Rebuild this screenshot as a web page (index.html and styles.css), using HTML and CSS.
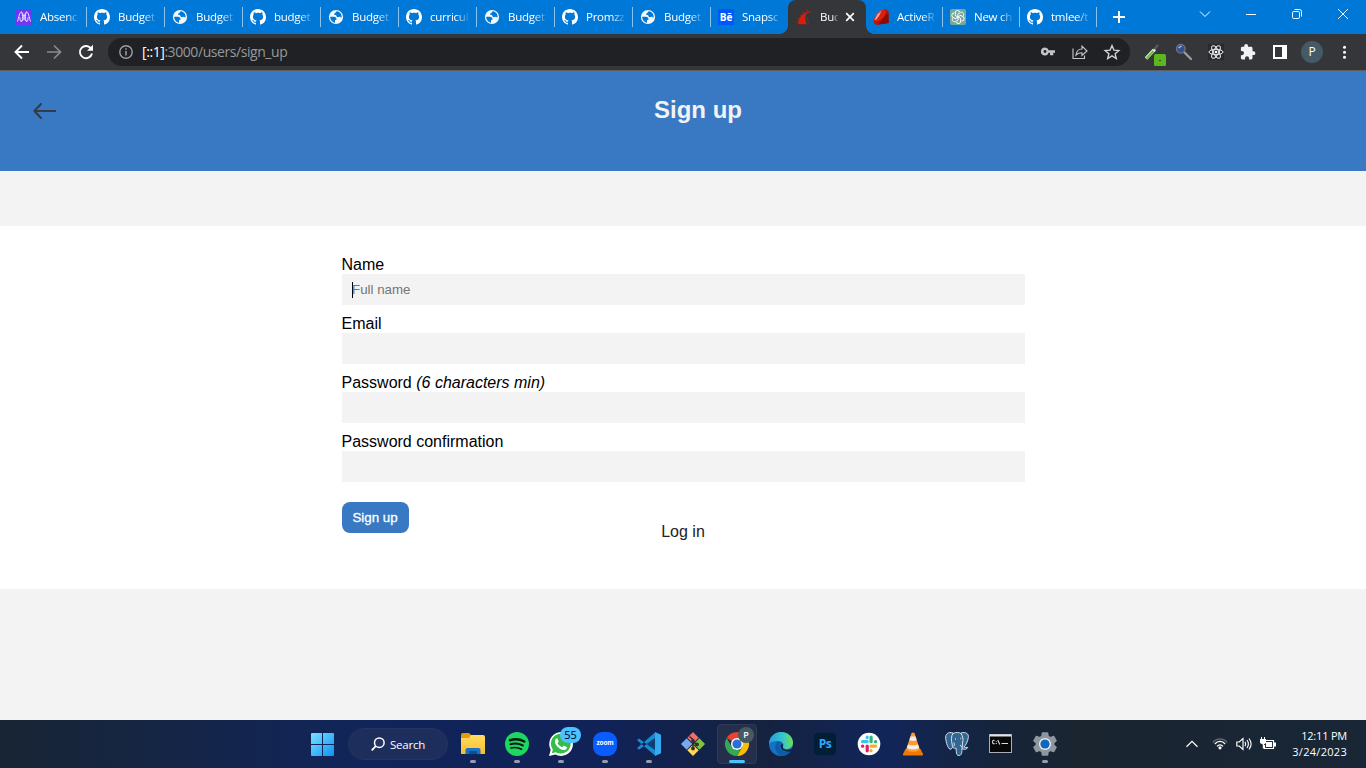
FILE: index.html
```html
<!DOCTYPE html>
<html lang="en">
<head>
<meta charset="utf-8">
<title>Budget App</title>
<link rel="stylesheet" href="styles.css">
</head>
<body>
<svg class="defs" width="0" height="0">
  <defs>
    <symbol id="github" viewBox="0 0 16 16"><path fill="#fff" d="M8 0C3.58 0 0 3.58 0 8c0 3.54 2.29 6.53 5.47 7.59.4.07.55-.17.55-.38 0-.19-.01-.82-.01-1.49-2.01.37-2.53-.49-2.69-.94-.09-.23-.48-.94-.82-1.13-.28-.15-.68-.52-.01-.53.63-.01 1.08.58 1.23.82.72 1.21 1.87.87 2.33.66.07-.52.28-.87.51-1.07-1.78-.2-3.64-.89-3.64-3.95 0-.87.31-1.59.82-2.15-.08-.2-.36-1.02.08-2.12 0 0 .67-.21 2.2.82.64-.18 1.32-.27 2-.27s1.36.09 2 .27c1.53-1.04 2.2-.82 2.2-.82.44 1.1.16 1.92.08 2.12.51.56.82 1.27.82 2.15 0 3.07-1.87 3.75-3.65 3.95.29.25.54.73.54 1.48 0 1.07-.01 1.93-.01 2.2 0 .21.15.46.55.38A8.01 8.01 0 0 0 16 8c0-4.42-3.58-8-8-8z"/></symbol>
    <symbol id="globe" viewBox="0 0 16 16"><circle cx="8" cy="8" r="7.100" fill="#f4f6f8"/><path fill="#0078d7" d="M2.200 7.800h3.600c1.600 0 2.800 1.100 2.800 2.300 0 .8-.9 1-1.600 1v2.600C4.500 13.300 2.200 11 2.200 7.800zM9 2.300c-1.200.2-.8 1.300-1.700 1.700-.9.400-1.500.8-1.200 1.500.3.700 1.500.2 2 .8.600.800.200 1.500 1.200 1.800 1 .2 1.300-.3 2.200-.3s1 .7 2.200.6C13.800 5.200 11.800 2.700 9 2.300z"/></symbol>
    <linearGradient id="gWin" x2="1" y2="1"><stop stop-color="#7be2ff"/><stop offset="1" stop-color="#0c92f4"/></linearGradient>
    <linearGradient id="gFolder" x2="0" y2="1"><stop stop-color="#ffdc63"/><stop offset="1" stop-color="#fbbd2a"/></linearGradient>
    <linearGradient id="gEdge" y1="0" y2="0" x2="1"><stop stop-color="#249de0"/><stop offset=".6" stop-color="#38c7c8"/><stop offset="1" stop-color="#6fe04c"/></linearGradient>
    <linearGradient id="gRuby" x2="1" y2="1"><stop stop-color="#f7b5a5"/><stop offset=".4" stop-color="#cf1507"/><stop offset="1" stop-color="#7d0800"/></linearGradient>
  </defs>
</svg>

<header class="tabstrip">
  <nav class="tabs">
    <div class="tab"><svg class="fav" viewBox="0 0 16 16"><path fill="#6f36f5" d="M0 0h16v16H0z"/><g fill="none" stroke="#e6dcff" stroke-width="1"><path d="M1.500 12.500C3 8 3.500 3 5.200 3S7 12.500 5.200 12.500 4.500 8 3.500 8M14.500 12.500C13 8 12.500 3 10.800 3S9 12.500 10.800 12.500 11.500 8 12.500 8M5.200 3C7.500 3 8 12.500 10.800 12.500M10.800 3C8.500 3 8 12.500 5.200 12.500"/></g></svg><span class="label">Absenc</span></div>
    <div class="tab"><svg class="fav"><use href="#github"/></svg><span class="label">Budget</span></div>
    <div class="tab"><svg class="fav"><use href="#globe"/></svg><span class="label">Budget</span></div>
    <div class="tab"><svg class="fav"><use href="#github"/></svg><span class="label">budget</span></div>
    <div class="tab"><svg class="fav"><use href="#globe"/></svg><span class="label">Budget</span></div>
    <div class="tab"><svg class="fav"><use href="#github"/></svg><span class="label">curricul</span></div>
    <div class="tab"><svg class="fav"><use href="#globe"/></svg><span class="label">Budget</span></div>
    <div class="tab"><svg class="fav"><use href="#github"/></svg><span class="label">Promzz</span></div>
    <div class="tab"><svg class="fav"><use href="#globe"/></svg><span class="label">Budget</span></div>
    <div class="tab last"><span class="fav behance">Bē</span><span class="label">Snapsc</span></div>
    <div class="tab active"><svg class="fav" viewBox="0 0 16 16"><path fill="#d91c0c" d="M2 15.200C2.500 9 6 3.500 12.500 3c1 0 1.800.3 2.200.8-3-.2-4.700.9-5.200 3.200-.5 3 .2 6 1 8.200z"/><path stroke="#d91c0c" stroke-width="1.200" d="M.5 13l1 .3M1.600 9.500l1 .5M3.800 5.800l.8.800M7 3l.5 1M11 1l.2 1.200M14.500 1.800l-.5.800M11 10h1.200M11.500 13h1.400"/></svg><span class="label">Buc</span><svg class="close" viewBox="0 0 10 10"><path d="M1.200 1.200l7.600 7.600M8.800 1.200L1.200 8.800" stroke="#fff" stroke-width="1.700"/></svg></div>
    <div class="tab narrow"><svg class="fav" viewBox="0 0 16 16"><path fill="url(#gRuby)" d="M.5 10.500L3.500 5 8 1l4.500-.9L15.500 2l.2 12L4 16 .8 14.500z"/><path fill="#d9200f" d="M5 6l5-4.500 3.500 1L11 8 6 12 3 12z"/><path fill="#fff" opacity=".6" d="M1.500 11l3-5.500 4-3.500-2.500 5-3 4z"/><path fill="#8d0a02" d="M11 8l4.500-4.500-.2 10.500-9.300 1.300z"/></svg><span class="label">ActiveR</span></div>
    <div class="tab narrow"><svg class="fav" viewBox="0 0 16 16"><rect width="16" height="16" rx="2" fill="#74a99b"/><g fill="none" stroke="#fff" stroke-width=".95"><path id="petal" d="M7.900 8.100V5l2.700-1.600c2.200-.8 4 1.600 2.600 3.500"/><use href="#petal" transform="rotate(60 8 8)"/><use href="#petal" transform="rotate(120 8 8)"/><use href="#petal" transform="rotate(180 8 8)"/><use href="#petal" transform="rotate(240 8 8)"/><use href="#petal" transform="rotate(300 8 8)"/></g></svg><span class="label">New ch</span></div>
    <div class="tab narrow"><svg class="fav"><use href="#github"/></svg><span class="label">tmlee/t</span></div>
  </nav>
  <svg class="newtab" viewBox="0 0 12 12"><path d="M6 0v12M0 6h12" stroke="#fff" stroke-width="2"/></svg>
  <div class="winctl">
    <svg viewBox="0 0 46 28"><path d="M18 11.500l5 5 5-5"/></svg>
    <svg viewBox="0 0 46 28"><path d="M18 14.500h10"/></svg>
    <svg viewBox="0 0 46 28"><rect x="18.500" y="11.500" width="7" height="7" rx="1.300"/><path d="M20.500 9.500h5q2 0 2 2v5"/></svg>
    <svg viewBox="0 0 46 28"><path d="M18 9l10 10M28 9L18 19"/></svg>
  </div>
</header>

<div class="toolbar">
  <div class="nav">
    <svg viewBox="0 0 16 16"><path d="M15 8H2M8 1.500L1.500 8 8 14.500" stroke="#fff" stroke-width="1.900" fill="none"/></svg>
    <svg viewBox="0 0 16 16"><path d="M1 8h13M8 1.500L14.500 8 8 14.500" stroke="#8b8c8e" stroke-width="1.700" fill="none"/></svg>
    <svg viewBox="0 0 16 16"><path d="M13.200 4.800A6.100 6.100 0 1 0 14 9.500" stroke="#fff" stroke-width="1.900" fill="none"/><path d="M15 .8v6H9z" fill="#fff"/></svg>
  </div>
  <div class="address">
    <svg class="info" viewBox="0 0 14 14"><circle cx="7" cy="7" r="6.200" fill="none" stroke="#9aa0a6" stroke-width="1.400"/><path d="M7 6v4.500M7 3.300v1.500" stroke="#9aa0a6" stroke-width="1.500"/></svg>
    <span class="url"><b>[::1]</b>:3000/users/sign_up</span>
    <svg class="act" viewBox="0 0 16 16"><path fill="#c3c4c6" fill-rule="evenodd" d="M5 3.500a4 4 0 1 0 3.700 5.300H10v2.400h3.300V8.800H15V6.200H8.700A4 4 0 0 0 5 3.500zm0 2.600a1.450 1.450 0 1 1 0 2.900 1.450 1.450 0 0 1 0-2.900z"/></svg>
    <svg class="act" viewBox="0 0 16 16"><path d="M1 4.500v10h11.500v-3M4 11c.5-4 2.500-6 6-6V2.200L15 7l-5 4.400V8.700C7.500 8.700 5.500 9.300 4 11z" fill="none" stroke="#c3c4c6" stroke-width="1.150"/></svg>
    <svg class="act" viewBox="0 0 16 16"><path d="M8 1.500l1.900 4.600 5 .4-3.800 3.200 1.200 4.800L8 11.900l-4.300 2.600 1.200-4.800L1.100 6.500l5-.4z" fill="none" stroke="#d0d1d3" stroke-width="1.350"/></svg>
  </div>
  <div class="exts">
    <svg viewBox="0 0 24 24"><path d="M13 11l5-6" stroke="#565b5c" stroke-width="2.400"/><path d="M13.500 9.500l2 1.500" stroke="#ddd" stroke-width="2"/><path d="M6 18.500l8-8.500" stroke="#dff3d0" stroke-width="3.300"/><path d="M6.500 18.500l7-7.500" stroke="#5ec52f" stroke-width="2"/><rect x="14" y="14" width="12" height="12" rx="1.500" fill="#5cb61e"/><path d="M19 20.500h2" stroke="#234d0b"/></svg>
    <svg viewBox="0 0 24 24"><path d="M12 12l7 7" stroke="#9a9b9f" stroke-width="2.400" stroke-linecap="round"/><circle cx="8.800" cy="8.800" r="4.300" fill="#324f91" stroke="#6d7380" stroke-width="1.400"/><path d="M6.500 8l3-2" stroke="#a7bce4" stroke-width="1.500"/></svg>
    <svg viewBox="0 0 24 24"><path fill="#292a2d" d="M4 4h16v16H4z"/><g fill="none" stroke="#eee" stroke-width="1"><ellipse cx="12" cy="12" rx="7" ry="2.700"/><ellipse cx="12" cy="12" rx="7" ry="2.700" transform="rotate(60 12 12)"/><ellipse cx="12" cy="12" rx="7" ry="2.700" transform="rotate(120 12 12)"/></g><circle cx="12" cy="12" r="1.300" fill="#fff"/></svg>
    <svg viewBox="0 0 24 24"><path fill="#f1f3f4" d="M17.500 11.300h-1V8.200c0-.8-.6-1.400-1.400-1.400H12v-.9a1.900 1.900 0 0 0-3.800 0v.9H6.300c-.8 0-1.400.6-1.400 1.400V11h1a2 2 0 0 1 0 4.200h-1V18c0 .8.600 1.400 1.400 1.400H9v-1a2 2 0 0 1 4.100 0v1h2c.8 0 1.400-.6 1.400-1.400v-2.900h1a1.900 1.900 0 0 0 0-3.800z"/></svg>
    <svg viewBox="0 0 24 24"><path fill="#fff" fill-rule="evenodd" d="M5 5h14v14H5zm2 2v10h7V7z"/></svg>
    <span class="avatar">P</span>
    <svg viewBox="0 0 24 24"><g fill="#fff"><circle cx="12.500" cy="7.300" r="1.500"/><circle cx="12.500" cy="12.300" r="1.500"/><circle cx="12.500" cy="17.300" r="1.500"/></g></svg>
  </div>
</div>

<main class="page">
  <header class="page-header">
    <svg class="back" viewBox="0 0 24 18"><path d="M22.300 9H1.500M8 2L1.300 9 8 16" fill="none" stroke="#333b45" stroke-width="2" stroke-linecap="round" stroke-linejoin="round"/></svg>
    <h1>Sign up</h1>
  </header>
  <section class="panel">
    <form class="form">
      <div class="field"><label>Name</label><div class="input"><span class="placeholder">Full name</span></div></div>
      <div class="field"><label>Email</label><div class="input"></div></div>
      <div class="field"><label>Password <em>(6 characters min)</em></label><div class="input"></div></div>
      <div class="field"><label>Password confirmation</label><div class="input"></div></div>
      <button class="submit" type="button">Sign up</button>
    </form>
    <a class="login">Log in</a>
  </section>
</main>

<footer class="taskbar">
  <div class="app"><svg viewBox="0 0 24 24"><path fill="url(#gWin)" d="M1 2q0-1 1-1H12v11H1zM13 1H23q1 0 1 1v10H13zM1 13h11v11H2q-1 0-1-1zM13 13h11v10q0 1-1 1H13z"/></svg></div>
  <div class="search"><svg viewBox="0 0 14 14"><circle cx="8.300" cy="5.700" r="4.800" fill="#253663" stroke="#fff" stroke-width="1.500"/><path d="M4.800 9.200L.7 13.300" stroke="#fff" stroke-width="1.700"/></svg><span>Search</span></div>
  <div class="app run"><svg viewBox="0 0 24 24"><path fill="#e49b0c" d="M0 3q0-2 2-2h6l2 2v5H0z"/><path fill="url(#gFolder)" d="M0 6h8l2-3h12q2 0 2 2v17H0z"/><path fill="#1673c6" d="M4.500 22v-4q0-2 2-2h11q2 0 2 2v4z"/><path fill="#0b4f95" d="M8 19h8v3H8z"/></svg></div>
  <div class="app run"><svg viewBox="0 0 24 24"><circle cx="12" cy="12" r="12" fill="#1ed760"/><g fill="none" stroke="#0b1a12" stroke-linecap="round"><path stroke-width="2.500" d="M5 8.200c5-1.500 10-1 14.300 1.300"/><path stroke-width="2.100" d="M5.500 12.200c4.500-1.300 8.500-.8 12.300 1.200"/><path stroke-width="1.700" d="M6 16c4-1 7-.6 10.500 1.200"/></g></svg></div>
  <div class="app run"><svg viewBox="0 0 24 24"><path fill="#fff" d="M0 24l1.700-6.200A11.900 11.900 0 1 1 6.300 22.400z"/><path fill="#35bd4a" d="M2.800 21.200l1-3.700a9.900 9.900 0 1 1 3 2.700z"/><path fill="#fff" d="M8.400 6.400c-.8-.5-2.600 1-2.500 3C6 13.500 11.500 18 15 18c2 0 3-1.500 3-2.700L14.800 13.500l-1.700 1.800c-2-.8-3.600-2.300-4.600-4.300l1.200-1.400z"/></svg><span class="count">55</span></div>
  <div class="app run"><span class="zoom">zoom</span></div>
  <div class="app run"><svg viewBox="0 0 24 24"><path fill="#168bd2" d="M0 8.200L2 6.500 18 18v5.500zM0 16l2 1.700L18 6V.5z"/><path fill="#35aaf0" d="M18 0l6 2.800v18.400L18 24z"/><path fill="#0876bb" d="M18 6v12l-8-6z" opacity=".35"/></svg></div>
  <div class="app"><svg viewBox="0 0 24 24"><g transform="rotate(45 12 12)"><path fill="#f06f6c" d="M3.500 3.500h8v8h-8z"/><path fill="#80c342" d="M12.500 3.500h8v8h-8z"/><path fill="#76a9ee" d="M3.500 12.500h8v8h-8z"/><path fill="#ffdc55" d="M12.500 12.500h8v8h-8z"/></g><path fill="none" stroke="#352e2e" stroke-width="1.500" d="M8.500 4.500l3.500 3v9M12 10l4 2.500"/><circle cx="12" cy="9" r="1.900" fill="#352e2e"/><circle cx="16" cy="12.500" r="1.900" fill="#352e2e"/><circle cx="12" cy="16.500" r="1.900" fill="#352e2e"/></svg></div>
  <div class="app current"><svg viewBox="0 0 24 24"><path fill="#e94235" d="M12 12L1.600 6A12 12 0 0 1 22.400 6z"/><path fill="#fbbc04" d="M12 12V6h10.400A12 12 0 0 1 12 24L17.200 15z"/><path fill="#34a853" d="M1.600 6L6.800 15l3.200 2.700h5.500L12 24A12 12 0 0 1 1.600 6z"/><circle cx="12" cy="12" r="6" fill="#fff"/><circle cx="12" cy="12" r="4.600" fill="#2870d8"/></svg><span class="profile">P</span></div>
  <div class="app"><svg viewBox="0 0 24 24"><circle cx="12" cy="12" r="12" fill="#1472c4"/><path fill="url(#gEdge)" d="M0 11C1 4 6 0 12 0c7 0 12 5 12 10.500 0 4-3 6.500-6.500 6.500-2.500 0-4-1-3.500-2.500 1.500-3-1-5.500-5-5.500C4.500 9 1 10 0 12z"/><path fill="#0d5ca9" d="M9 9.500c-4 3-4 10 3 14.500 5 0 8-2.500 10-5.500-6 3-12 0-11.500-5 .2-1.500 1-2.500 2-3z"/><path fill="#13254a" d="M14 14.500c-.6 2 1.500 3.500 4.500 3.300 2.500-.2 4.500-1.200 6-2.800l-1.500 4c-5 2-11.500-.5-11.500-4.500 0-1.500.6-2.500 1.500-3 1 .8 1.300 1.800 1 3z"/></svg></div>
  <div class="app"><span class="ps">Ps</span></div>
  <div class="app"><svg viewBox="0 0 24 24"><circle cx="12" cy="12" r="11.300" fill="#fff"/><g stroke-width="3.200" stroke-linecap="round"><path stroke="#36c5f0" d="M5.500 9.700h4.700M10.200 5.200v.2"/><path stroke="#2eb67d" d="M14.100 5v4.700M18.700 9.700h-.2"/><path stroke="#ecb22e" d="M14 14.200h4.700M14 18.700v-.2"/><path stroke="#e01e5a" d="M10.200 14.200v4.600M5.500 14.200h.2"/></g></svg></div>
  <div class="app"><svg viewBox="0 0 24 24"><path fill="#ee7800" d="M4.500 17h15l2.500 5q.5 1.500-1 1.500H3q-1.500 0-1-1.500z"/><path fill="#ff9b2d" d="M10.500 1q1.500-1 3 0L19 18q-7 4-14 0z"/><path fill="#eeeeee" d="M9.500 4.500h5l1.200 3.800q-3.700 1.500-7.400 0zM7 12.500q5 2 10 0l1.200 3.500q-6.200 3-12.400 0z"/></svg></div>
  <div class="app"><svg viewBox="0 0 24 24"><g fill="#336791" stroke="#d3e1eb" stroke-width="1"><path d="M8 1C3-.5.300 2 .700 6.500 1.200 11 3 16.500 5 17.200c1.500.3 2.500-1.500 3.500-3z"/><path d="M16 1c5-1.500 8 1 7.300 4.500-.5 4-2.500 8-4.500 9.500 1 .6 2.500.4 4 .4-1 2-3 2.200-5 1.700l-3-4z"/><path d="M8 1.500c3-1.500 6-1.300 8 0 2 3 2.500 6 1.500 9.500L17 17c0 4-.7 6.500-3 6.500-2 0-2.700-1.500-2.700-4L11 16c-2 1-4-.5-3.700-3C6 8 6 4 8 1.500z"/></g><path d="M10 7h.7M15.500 6.500h.7" stroke="#fff" stroke-width="1.500"/><path d="M9 10.500q1 3-.5 4M15 13q1 2 3 2" fill="none" stroke="#d3e1eb"/></svg></div>
  <div class="app"><svg viewBox="0 0 24 24"><rect x=".5" y="2.500" width="22" height="18" fill="#080808" stroke="#a8b0b5"/><path fill="#dfe3e6" d="M1 2.500h21v2H1z"/><path d="M5.600 8.500q-2-1-2 1.500t2 1.500M7.300 9v.8M7.300 11v1M8.800 8l2 4.500M12.500 11.500h6.500" fill="none" stroke="#ddd" stroke-width="1.100"/></svg></div>
  <div class="app run"><svg viewBox="0 0 24 24"><path fill="#8e979f" stroke="#8e979f" stroke-width="1.500" stroke-linejoin="round" d="M9.500 1h5l.6 3.300 2.300 1.300 3.200-1.100 2.500 4.300-2.500 2.100v2.200l2.500 2.100-2.500 4.300-3.200-1.100-2.300 1.300-.6 3.300h-5l-.6-3.300-2.300-1.300-3.200 1.100-2.500-4.300 2.500-2.100v-2.200L.9 8.800l2.500-4.300 3.200 1.100 2.300-1.300z"/><circle cx="12" cy="12" r="6.100" fill="#e6e9ec"/><circle cx="12" cy="12" r="4.600" fill="#0c67bd"/></svg></div>
  <div class="tray">
    <svg viewBox="0 0 16 16"><path d="M2.500 10.700L8 5.300l5.500 5.400" fill="none" stroke="#fff" stroke-width="1.200"/></svg>
    <svg class="wifi" viewBox="0 0 16 16"><g fill="none" stroke="#fff" stroke-width="1.300"><path opacity=".3" d="M.8 6.500C4.800 1.800 11.200 1.800 15.200 6.500"/><path d="M2.800 8c3-3.600 7.400-3.600 10.400 0M5 10.300c1.700-2 4.300-2 6 0"/></g><circle cx="8" cy="11.800" r="1.600" fill="#fff"/></svg>
    <svg viewBox="0 0 16 16"><g fill="none" stroke="#fff" stroke-width="1.150"><path d="M.8 6h2.400L7 2.500v11L3.200 10H.8zM9 5.800q1.400 2.200 0 4.400M11 4q2.800 4 0 8M13 2.500q4.200 5.500 0 11"/></g></svg>
    <svg viewBox="0 0 16 16"><path fill="none" stroke="#fff" stroke-width="1.200" d="M5.500 4.500h8v8h-9V9"/><path fill="#fff" d="M6 6h6v5H6zM14 6.500h2v4h-2zM1 1h1v2h2V1h1v2h1v4L4 8.500v4H2.800V8.500L0 7V3h1z"/></svg>
  </div>
  <div class="clock"><span class="time">12:11 PM</span><span class="date">3/24/2023</span></div>
</footer>
</body>
</html>
```
FILE: styles.css
```css
* { box-sizing: border-box; }
body {
  margin: 0;
  width: 1366px;
  height: 768px;
  overflow: hidden;
  display: flex;
  flex-direction: column;
  font-family: "Liberation Sans", Arial, sans-serif;
  background: #f3f3f3;
}
svg { display: block; flex: none; overflow: visible; }
.defs { position: absolute; }

.tabstrip {
  height: 34px;
  flex: none;
  display: flex;
  background: #0078d7;
  padding-left: 8px;
  font-family: "Open Sans", "Noto Sans", sans-serif;
}
.tabs { display: flex; }
.tab {
  position: relative;
  width: 78px;
  height: 34px;
  display: flex;
  align-items: center;
  padding-left: 8px;
  gap: 8px;
}
.tab::after {
  content: "";
  position: absolute;
  right: -1px;
  top: 7px;
  width: 1px;
  height: 20px;
  background: #8cc2ee;
}
.tab.last::after, .tab.active::after { display: none; }
.tab.narrow { width: 77px; left: -1px; }
.fav { width: 16px; height: 16px; flex: none; }
.behance {
  background: #0057ff;
  color: #fff;
  font: bold 10px/16px "Open Sans", sans-serif;
  text-align: center;
}
.label {
  width: 38px;
  white-space: nowrap;
  color: #fff;
  font-size: 11.5px;
  font-weight: 500;
  line-height: 18px;
  letter-spacing: -0.25px;
  -webkit-mask-image: linear-gradient(90deg, #000 68%, rgba(0, 0, 0, 0.15));
  mask-image: linear-gradient(90deg, #000 68%, rgba(0, 0, 0, 0.15));
}
.active {
  background: #35363a;
  border-radius: 8px 8px 0 0;
}
.active::before {
  content: "";
  position: absolute;
  left: -8px;
  right: -8px;
  bottom: 0;
  height: 8px;
  background:
    radial-gradient(circle at 0 0, transparent 7.5px, #35363a 8px) left / 8px 8px no-repeat,
    radial-gradient(circle at 100% 0, transparent 7.5px, #35363a 8px) right / 8px 8px no-repeat;
}
.active .label { width: 18px; }
.close { width: 10px; height: 10px; margin-left: -1px; }
.newtab { width: 12px; height: 12px; margin: 11px 0 0 16px; }
.winctl { margin-left: auto; display: flex; }
.winctl svg { width: 46px; height: 28px; fill: none; stroke: #fff; stroke-width: 1; }

.toolbar {
  height: 37px;
  flex: none;
  display: flex;
  align-items: center;
  background: #35363a;
  border-bottom: 1px solid #5b5e63;
}
.nav { width: 108px; display: flex; gap: 16px; padding-left: 14px; }
.nav svg { width: 16px; height: 16px; }
.address {
  width: 1022px;
  height: 28px;
  border-radius: 14px;
  background: #202124;
  display: flex;
  align-items: center;
  padding: 0 10px 0 11px;
}
.info { width: 14px; height: 14px; }
.url {
  flex: 1;
  margin-left: 9px;
  color: #96999d;
  font: 14px/20px "Open Sans", "Noto Sans", sans-serif;
  letter-spacing: -0.43px;
}
.url b { font-weight: 400; color: #fff; }
.act { width: 16px; height: 16px; margin-left: 16px; }
.exts { display: flex; gap: 8px; padding-left: 10px; align-items: center; }
.exts svg { width: 24px; height: 24px; }
.avatar {
  width: 22px;
  height: 22px;
  margin: 0 1px;
  border-radius: 50%;
  background: #455a64;
  color: #fff;
  font: 12px/22px "Open Sans", sans-serif;
  text-align: center;
}

.page { flex: 1; background: #f3f3f3; }
.page-header {
  height: 100px;
  background: #3979c4;
  display: flex;
  padding: 25px 0 0 33px;
}
.back { width: 24px; height: 18px; margin-top: 6px; }
.page-header h1 {
  margin: 0 0 0 597px;
  color: #f2f2f2;
  font-size: 24px;
  line-height: 28px;
}
.panel {
  margin-top: 55px;
  height: 363px;
  background: #fff;
  padding-top: 29px;
  display: flex;
  flex-direction: column;
  align-items: center;
}
.form { width: 683px; margin-left: 1px; }
.field { height: 59px; }
.field label {
  display: block;
  height: 19px;
  margin-left: -0.5px;
  font-size: 16px;
  line-height: 19px;
  color: #000;
}
.input {
  height: 31px;
  background: #f3f3f3;
  padding-left: 10px;
  display: flex;
  align-items: center;
}
.placeholder {
  color: #757575;
  font-size: 13.333px;
  line-height: 16px;
  border-left: 1px solid #000;
  text-indent: -1px;
}
.submit {
  display: block;
  margin-top: 11px;
  width: 67px;
  height: 31px;
  padding: 0 1px 0 0;
  border: 0;
  border-radius: 8px;
  background: #3979c4;
  color: #fff;
  font: 13.333px "Liberation Sans", Arial, sans-serif;
  -webkit-text-stroke: 0.3px #fff;
}
.login { margin-top: -10px; font-size: 16px; line-height: 18px; color: #222; }

.taskbar {
  height: 48px;
  flex: none;
  display: flex;
  align-items: center;
  padding-left: 300px;
  background: linear-gradient(90deg, #192534 0, #152544 150px, #11255a 350px, #102258 600px, #15223f 770px, #11255a 880px, #16243a 1000px, #1a2530 1080px, #182636 1366px);
  color: #fff;
  font-family: "Open Sans", "Noto Sans", sans-serif;
}
.app {
  position: relative;
  width: 44px;
  height: 48px;
  display: flex;
  align-items: center;
  justify-content: center;
}
.app svg { width: 24px; height: 24px; }
.run::after, .current::after {
  content: "";
  position: absolute;
  bottom: 5px;
  left: 19px;
  width: 6px;
  height: 3px;
  border-radius: 2px;
  background: #969db0;
}
.current::before {
  content: "";
  position: absolute;
  inset: 4px 2px;
  border-radius: 4px;
  background: #252f4c;
  border: 1px solid #303a55;
}
.current svg { position: relative; }
.current::after { left: 14px; width: 16px; background: #4cc2ff; }
.search {
  width: 100px;
  height: 32px;
  margin: 0 3px 0 4px;
  border-radius: 16px;
  background: #1e2e5c;
  border: 1px solid #25355f;
  display: flex;
  align-items: center;
  padding-left: 22px;
  gap: 5px;
  font-size: 11.5px;
  font-weight: 500;
  letter-spacing: -0.2px;
}
.search svg { width: 14px; height: 14px; }
.count {
  position: absolute;
  left: 21px;
  top: 7px;
  width: 21px;
  height: 16px;
  border-radius: 8px;
  background: #4cc2ff;
  color: #000;
  font-size: 11px;
  line-height: 16px;
  text-align: center;
}
.zoom {
  width: 24px;
  height: 24px;
  border-radius: 9px;
  background: #0b5cff;
  font: bold 6.5px/22px "Open Sans", sans-serif;
  letter-spacing: -0.1px;
  text-align: center;
}
.profile {
  position: absolute;
  left: 23px;
  top: 7px;
  width: 16px;
  height: 16px;
  border-radius: 50%;
  background: #455a64;
  font: 600 9px/16px "Open Sans", sans-serif;
  text-align: center;
}
.ps {
  width: 22px;
  height: 22px;
  border-radius: 4px;
  background: #001e36;
  color: #31a8ff;
  font: bold 12px/21px "Open Sans", sans-serif;
  letter-spacing: -0.4px;
  text-align: center;
}
.tray { margin-left: auto; display: flex; gap: 8px; }
.tray svg { width: 16px; height: 16px; }
.tray .wifi { margin-left: 4px; }
.clock {
  width: 71px;
  margin-right: 19px;
  display: flex;
  flex-direction: column;
  align-items: flex-end;
  font-size: 11px;
  line-height: 16px;
}
.time { letter-spacing: -0.2px; }
.date { letter-spacing: 0.3px; }
```
